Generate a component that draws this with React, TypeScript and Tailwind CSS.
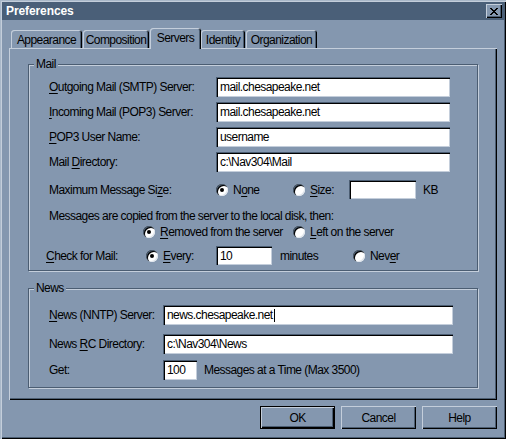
import React from 'react';

// colours of this bluish win95 scheme
// face #8497af, title #4a5f78, light #c4cedb, dark #4b5d72

function U({ children }: { children: React.ReactNode }) {
  return <span className="underline underline-offset-[2px] decoration-[1px]">{children}</span>;
}

function Field({ value, className, caret }: { value: string; className: string; caret?: boolean }) {
  return (
    <div
      className={`flex items-center bg-white pl-[4px] shadow-[inset_1px_1px_0_#4b5d72,inset_2px_2px_0_#000,inset_-1px_-1px_0_#c4cedb] ${className}`}
    >
      <span>{value}</span>
      {caret && <span className="ml-[1px] h-[13px] w-[1px] bg-black" />}
    </div>
  );
}

function Radio({ checked }: { checked?: boolean }) {
  return (
    <span className="flex h-[12px] w-[12px] shrink-0 items-center justify-center rounded-full bg-white shadow-[inset_1px_1px_0_#4b5d72,inset_2px_2px_0_#000,inset_-1px_-1px_0_#dfe5ec]">
      {checked && <span className="h-[4px] w-[4px] rounded-full bg-black" />}
    </span>
  );
}

function Option({ checked, children, className }: { checked?: boolean; children: React.ReactNode; className?: string }) {
  return (
    <div className={`flex items-center gap-[5px] ${className ?? ''}`}>
      <Radio checked={checked} />
      <span>{children}</span>
    </div>
  );
}

function Group({ label, className, children }: { label: string; className: string; children: React.ReactNode }) {
  return (
    <div
      className={`relative border border-[#4b5d72] shadow-[inset_1px_1px_0_#c4cedb,1px_1px_0_#c4cedb] ${className}`}
    >
      <span className="absolute -top-[8px] left-[5px] bg-[#8497af] px-[2px] leading-[14px]">{label}</span>
      {children}
    </div>
  );
}

const tabs = [
  { name: 'Appearance', cls: 'ml-[2px] w-[71px]' },
  { name: 'Composition', cls: 'ml-[1px] w-[66px]' },
  { name: 'Servers', cls: 'ml-[1px] w-[51px]', active: true },
  { name: 'Identity', cls: 'w-[44px]' },
  { name: 'Organization', cls: 'ml-[1px] w-[71px]' },
];

const raised = 'shadow-[inset_1px_1px_0_#c4cedb,inset_-1px_-1px_0_#000,inset_-2px_-2px_0_#4b5d72]';

export default function App() {
  return (
    <div className="flex h-[439px] w-[506px] flex-col bg-[#8497af] p-[2px] font-['Liberation_Sans',Arial,sans-serif] text-[12px] leading-[14px] tracking-[-0.55px] text-black shadow-[inset_1px_1px_0_#a9b8c9,inset_2px_2px_0_#c4cedb,inset_-1px_-1px_0_#000,inset_-2px_-2px_0_#4b5d72]">
      {/* ── Title bar ── */}
      <div className="flex h-[18px] items-center justify-between bg-[#4a5f78] pl-[4px] pr-[2px]">
        <span className="text-[12px] font-bold tracking-[-0.1px] text-white">Preferences</span>
        <div className={`flex h-[14px] w-[16px] items-center justify-center bg-[#8497af] ${raised}`}>
          <svg width="8" height="7" viewBox="0 0 8 7" shapeRendering="crispEdges">
            <path d="M0 0h2v1h-2zM6 0h2v1h-2zM1 1h2v1h-2zM5 1h2v1h-2zM2 2h4v1h-4zM3 3h2v1h-2zM2 4h4v1h-4zM1 5h2v1h-2zM5 5h2v1h-2zM0 6h2v1h-2zM6 6h2v1h-2z" fill="#000" />
          </svg>
        </div>
      </div>

      <div className="flex flex-1 flex-col px-[7px] pt-[8px]">
        {/* ── Tabs ── */}
        <div className="flex h-[20px] items-end">
          {tabs.map((t) =>
            t.active ? (
              <div
                key={t.name}
                className={`relative z-10 -mb-[1px] flex h-[21px] items-start justify-center rounded-t-[3px] bg-[#8497af] pt-[3px] shadow-[inset_1px_1px_0_#c4cedb,inset_-1px_0_0_#000,inset_-2px_0_0_#4b5d72] ${t.cls}`}
              >
                {t.name}
              </div>
            ) : (
              <div
                key={t.name}
                className={`flex h-[18px] items-center justify-center rounded-t-[3px] pt-[1px] shadow-[inset_1px_1px_0_#c4cedb,inset_-1px_0_0_#000,inset_-2px_0_0_#4b5d72] ${t.cls}`}
              >
                {t.name}
              </div>
            ),
          )}
        </div>

        {/* ── Panel ── */}
        <div className={`flex h-[352px] flex-col px-[19px] pt-[16px] ${raised}`}>
          <Group label="Mail" className="h-[207px] pl-[20px] pt-[12px]">
            <div className="flex flex-col gap-[5px]">
              <div className="flex h-[20px] items-center">
                <span className="w-[167px]"><U>O</U>utgoing Mail (SMTP) Server:</span>
                <Field value="mail.chesapeake.net" className="h-[20px] w-[234px]" />
              </div>
              <div className="flex h-[20px] items-center">
                <span className="w-[167px]"><U>I</U>ncoming Mail (POP3) Server:</span>
                <Field value="mail.chesapeake.net" className="h-[20px] w-[234px]" />
              </div>
              <div className="flex h-[20px] items-center">
                <span className="w-[167px]"><U>P</U>OP3 User Name:</span>
                <Field value="username" className="h-[20px] w-[234px]" />
              </div>
              <div className="flex h-[20px] items-center">
                <span className="w-[167px]">Mail <U>D</U>irectory:</span>
                <Field value="c:\Nav304\Mail" className="h-[20px] w-[234px]" />
              </div>
            </div>

            <div className="mt-[8px] flex h-[19px] items-center">
              <span className="w-[167px]">Maximum Message Si<U>z</U>e:</span>
              <Option checked className="w-[77px]">N<U>o</U>ne</Option>
              <Option className="w-[56px]"><U>S</U>ize:</Option>
              <Field value="" className="h-[19px] w-[67px]" />
              <span className="ml-[7px]">KB</span>
            </div>

            <div className="mt-[10px] h-[14px]">Messages are copied from the server to the local disk, then:</div>

            <div className="mt-[2px] flex h-[14px] items-center pl-[94px]">
              <Option checked className="w-[150px]"><U>R</U>emoved from the server</Option>
              <Option><U>L</U>eft on the server</Option>
            </div>

            <div className="mt-[7px] -ml-[3px] flex h-[19px] items-center">
              <span className="w-[100px]"><U>C</U>heck for Mail:</span>
              <Option checked className="w-[70px] gap-[4px]"><U>E</U>very:</Option>
              <Field value="10" className="h-[19px] w-[56px]" />
              <span className="w-[81px] pl-[8px]">minutes</span>
              <Option className="gap-[4px]">Nev<U>e</U>r</Option>
            </div>
          </Group>

          <Group label="News" className="mt-[17px] h-[100px] pl-[20px] pt-[16px]">
            <div className="flex h-[20px] items-center">
              <span className="w-[114px]"><U>N</U>ews (NNTP) Server:</span>
              <Field value="news.chesapeake.net" caret className="h-[20px] w-[290px]" />
            </div>
            <div className="mt-[9px] flex h-[20px] items-center">
              <span className="w-[114px]">News <U>R</U>C Directory:</span>
              <Field value="c:\Nav304\News" className="h-[20px] w-[290px]" />
            </div>
            <div className="mt-[6px] flex h-[20px] items-center">
              <span className="w-[114px]">Get:</span>
              <Field value="100" className="h-[20px] w-[34px]" />
              <span className="ml-[7px]">Messages at a Time (Max 3500)</span>
            </div>
          </Group>
        </div>

        {/* ── Buttons ── */}
        <div className="mt-[6px] flex justify-end gap-[6px]">
          <button className="flex h-[23px] w-[75px] items-center justify-center border border-black bg-[#8497af] shadow-[inset_1px_1px_0_#c4cedb,inset_-1px_-1px_0_#000,inset_-2px_-2px_0_#4b5d72]">
            OK
          </button>
          <button className={`flex h-[23px] w-[75px] items-center justify-center bg-[#8497af] ${raised}`}>Cancel</button>
          <button className={`flex h-[23px] w-[75px] items-center justify-center bg-[#8497af] ${raised}`}>Help</button>
        </div>
      </div>
    </div>
  );
}
